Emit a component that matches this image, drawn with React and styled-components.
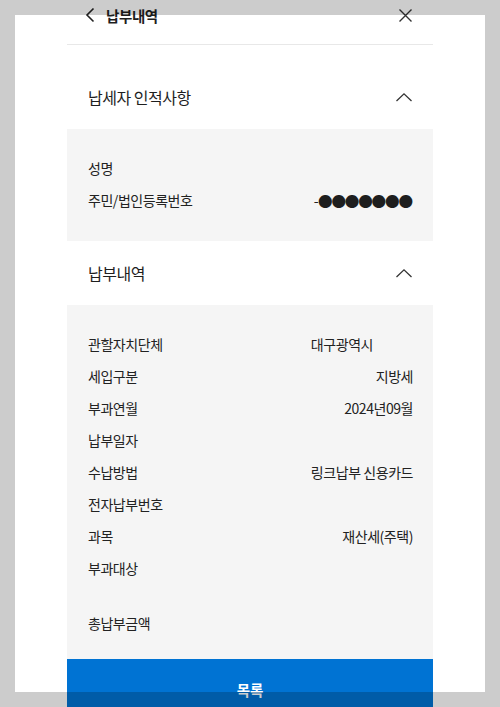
import React from 'react'
import styled, { createGlobalStyle } from 'styled-components'

const GlobalStyle = createGlobalStyle`
  html, body {
    margin: 0;
    padding: 0;
    background: #fff;
  }
  body {
    font-family: "Noto Sans CJK KR", "Noto Sans", sans-serif;
    color: #222;
  }
`

const taxpayer = [
  { label: '성명', value: '' },
  { label: '주민/법인등록번호', value: '-', dots: '●●●●●●●' },
]

const payment = [
  { label: '관할자치단체', value: '대구광역시', offset: 40 },
  { label: '세입구분', value: '지방세' },
  { label: '부과연월', value: '2024년09월' },
  { label: '납부일자', value: '' },
  { label: '수납방법', value: '링크납부 신용카드' },
  { label: '전자납부번호', value: '' },
  { label: '과목', value: '재산세(주택)' },
  { label: '부과대상', value: '' },
]

const ChevronUp = () => (
  <svg width="18" height="10" viewBox="0 0 18 10" fill="none">
    <path d="M1.5 9 L9 1.8 L16.5 9" stroke="#333" strokeWidth="1.3" />
  </svg>
)

const Section = ({ title, rows, total, first, bottom }) => (
  <>
    <SectionHead $first={first}>
      <SectionTitle>{title}</SectionTitle>
      <ChevronUp />
    </SectionHead>
    <InfoBox $bottom={bottom}>
      {rows.map((r) => (
        <Row key={r.label}>
          <Label>{r.label}</Label>
          <Value $offset={r.offset || 0}>
            {r.value}
            {r.dots && <Dots>{r.dots}</Dots>}
          </Value>
        </Row>
      ))}
      {total && (
        <TotalRow>
          <Label>{total}</Label>
        </TotalRow>
      )}
    </InfoBox>
  </>
)

const App = () => {
  return <Page>
    <GlobalStyle />
    <Column>
      {/* top bar */}
      <TopBar>
        <BackBtn>
          <svg width="10" height="16" viewBox="0 0 10 16" fill="none">
            <path d="M8.5 1.5 L2 8 L8.5 14.5" stroke="#222" strokeWidth="1.6" />
          </svg>
          <PageTitle>납부내역</PageTitle>
        </BackBtn>
        <svg width="15" height="15" viewBox="0 0 15 15" fill="none">
          <path d="M1.5 1.5 L13.5 13.5 M13.5 1.5 L1.5 13.5" stroke="#333" strokeWidth="1.4" />
        </svg>
      </TopBar>

      <Section title="납세자 인적사항" rows={taxpayer} first bottom={25} />
      <Section title="납부내역" rows={payment} total="총납부금액" bottom={20} />

      <ListButton type="button">목록</ListButton>
    </Column>
    <Frame />
  </Page>
}

const Page = styled.div`
  min-height: 707px;
  overflow: hidden;
`

const Column = styled.div`
  width: 366px;
  margin: 0 auto;
`

const TopBar = styled.header`
  display: flex;
  align-items: center;
  justify-content: space-between;
  height: 30px;
  padding: 0 20px 14px 18px;
  border-bottom: 1px solid #e8e8e8;
`

const BackBtn = styled.div`
  display: flex;
  align-items: center;
  gap: 11px;
`

const PageTitle = styled.h1`
  margin: 0;
  font-size: 14.5px;
  font-weight: 700;
  letter-spacing: -0.4px;
  color: #1e1e1e;
`

const SectionHead = styled.div`
  display: flex;
  align-items: center;
  justify-content: space-between;
  height: 64px;
  padding: 0 20px 0 21px;
  margin-top: ${(p) => (p.$first ? '20px' : '0')};
`

const SectionTitle = styled.h2`
  margin: 0;
  font-size: 16px;
  font-weight: 400;
  letter-spacing: -0.5px;
  color: #1e1e1e;
`

const InfoBox = styled.div`
  background: #f5f5f5;
  padding: 23px 20px ${(p) => p.$bottom}px 21px;
`

const Row = styled.div`
  display: flex;
  align-items: center;
  justify-content: space-between;
  height: 32px;
`

const TotalRow = styled(Row)`
  margin-top: 23px;
`

const Label = styled.span`
  font-size: 14px;
  letter-spacing: -0.45px;
  color: #222;
`

const Value = styled.span`
  display: flex;
  align-items: center;
  font-size: 14px;
  letter-spacing: -0.45px;
  margin-right: ${(p) => p.$offset}px;
  color: #222;
`

const Dots = styled.span`
  font-size: 14.6px;
  letter-spacing: -1.2px;
  margin-right: 1.2px;
  color: #1e1e1e;
`

const ListButton = styled.button`
  display: block;
  width: 100%;
  height: 60px;
  border: none;
  background: #0073d3;
  color: #fff;
  font-family: inherit;
  font-size: 14.5px;
  font-weight: 700;
  padding: 0;
`

const Frame = styled.div`
  position: fixed;
  inset: 0;
  border: 15px solid rgba(0, 0, 0, 0.2);
  pointer-events: none;
`

export default App
